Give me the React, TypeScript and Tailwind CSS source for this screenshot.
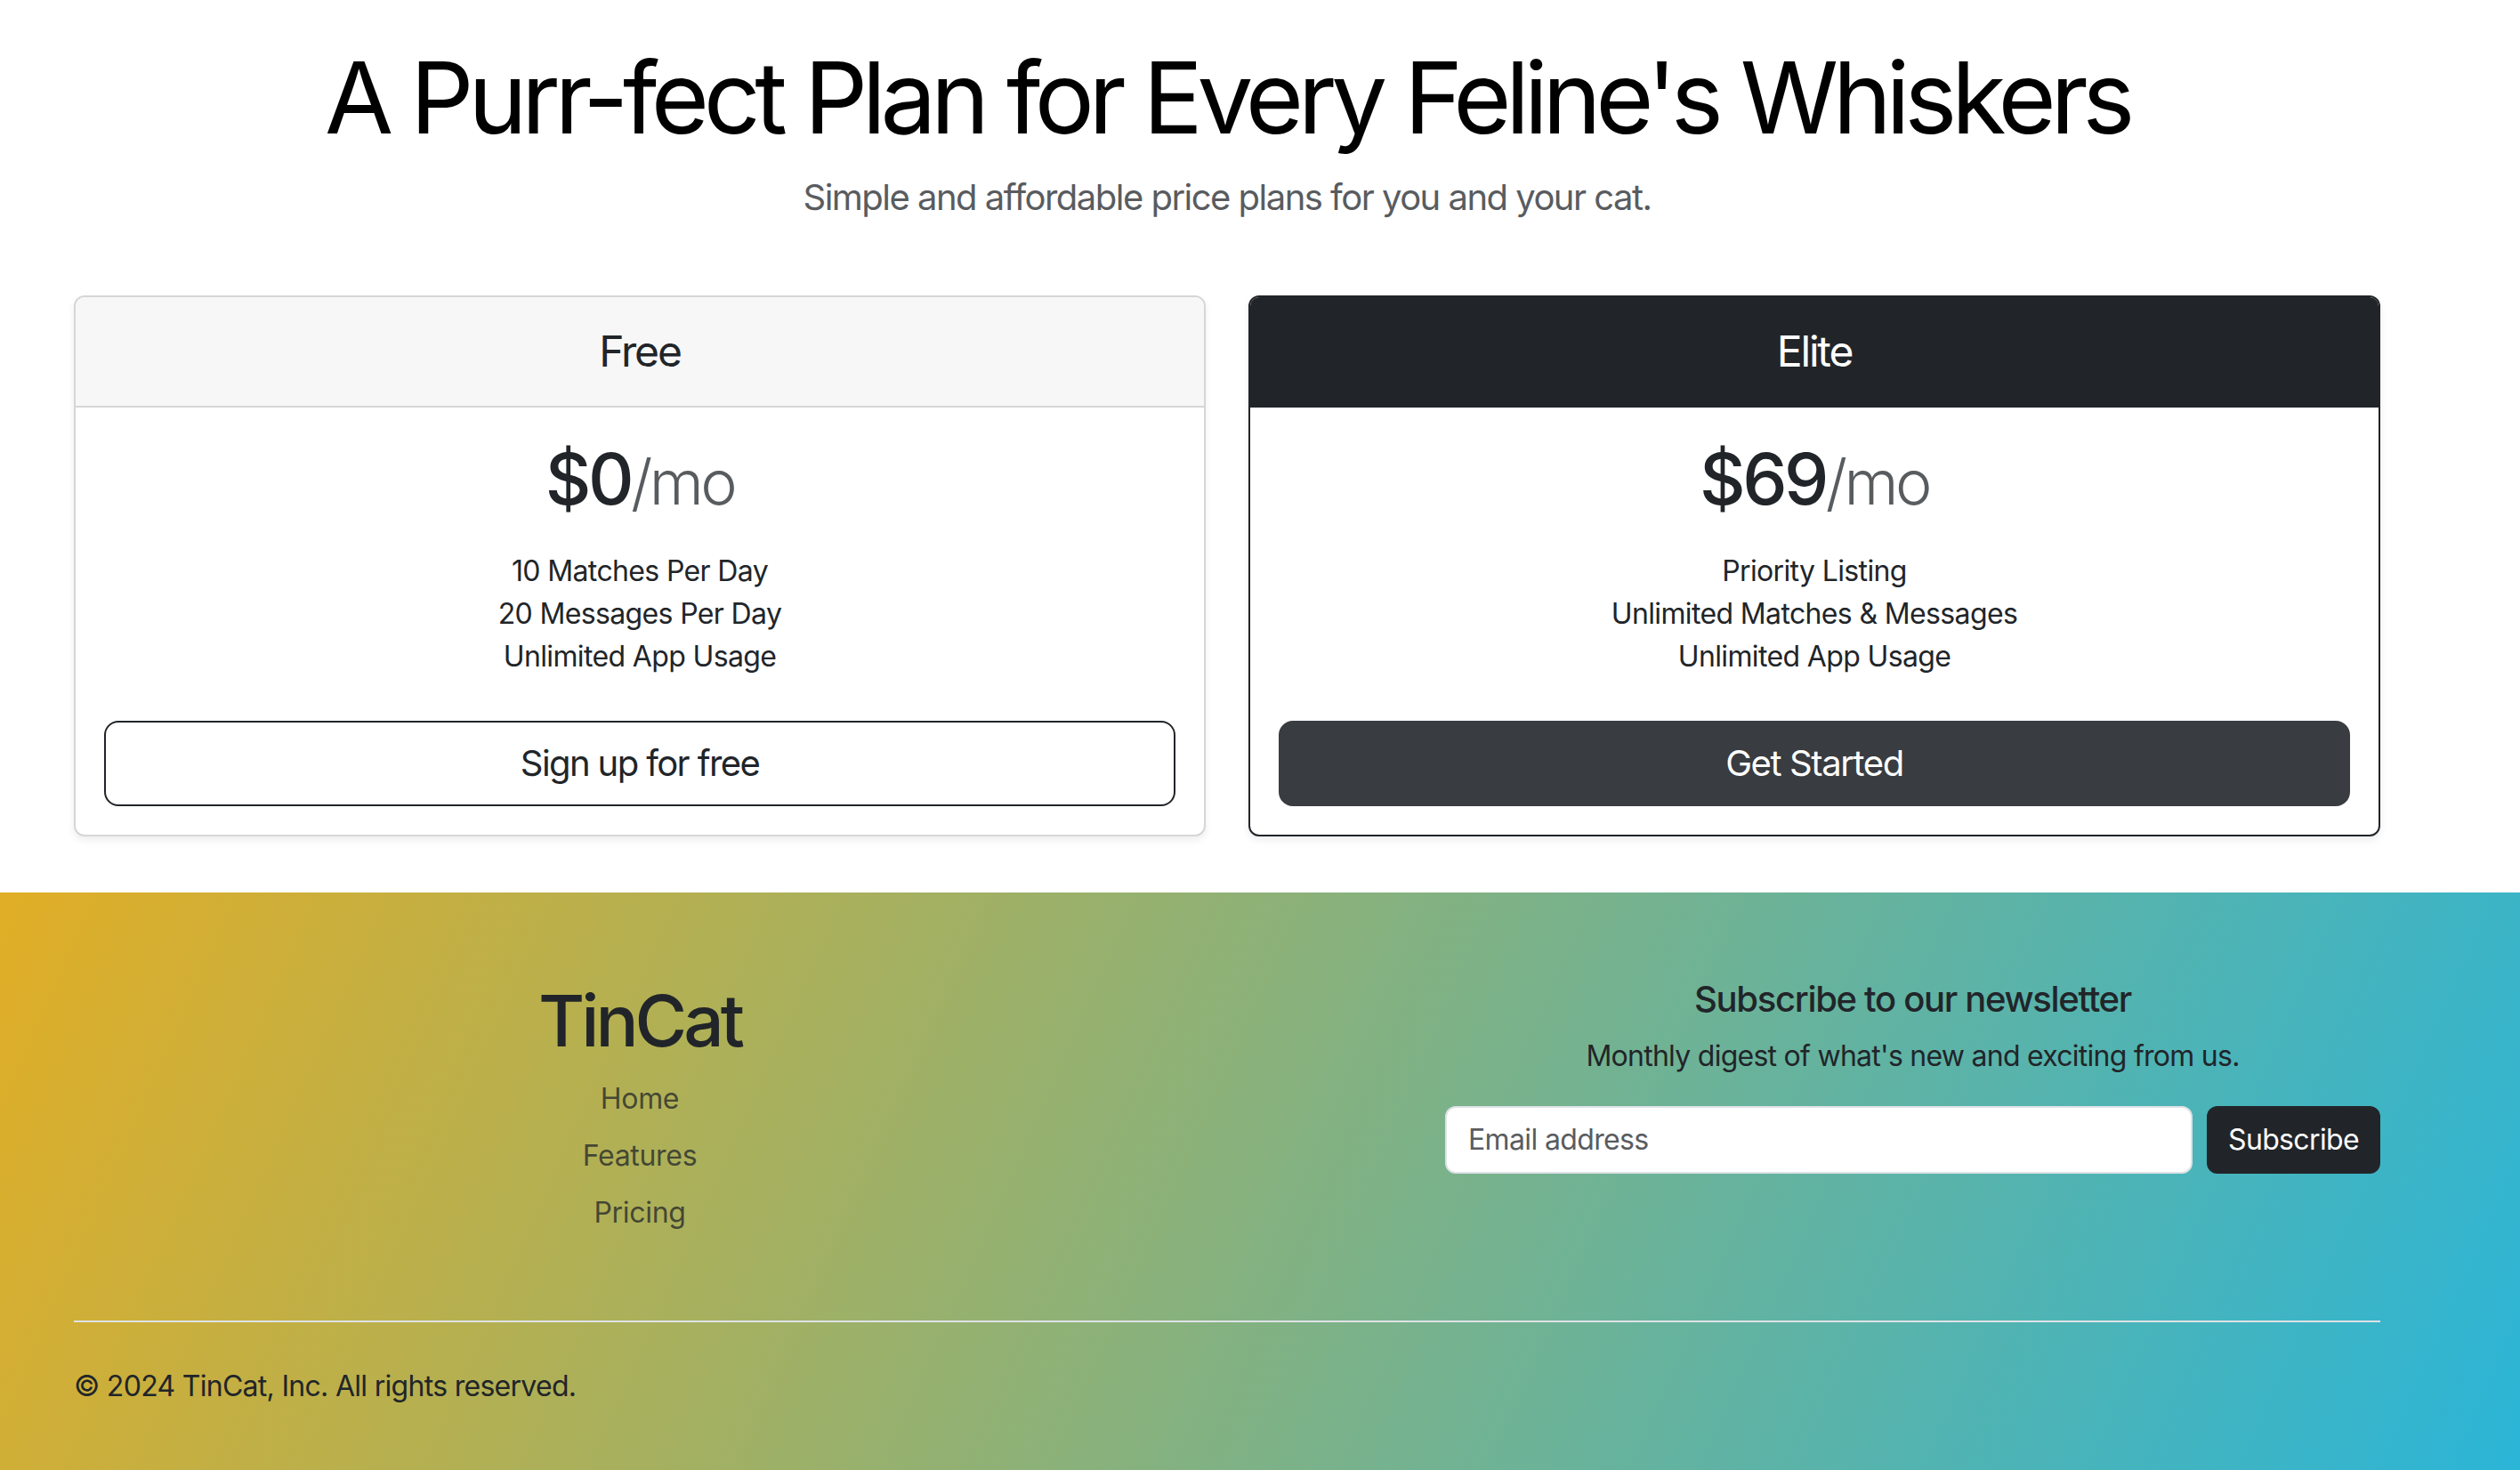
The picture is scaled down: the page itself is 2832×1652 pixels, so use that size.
import React from "react";

const FONT = "font-['Inter','Noto_Sans',sans-serif]";

function Card({
  title,
  price,
  features,
  cta,
  elite,
}: {
  title: string;
  price: string;
  features: string[];
  cta: string;
  elite?: boolean;
}) {
  return (
    <div
      className={
        "rounded-[12px] border-2 bg-white overflow-hidden shadow-[0_4px_8px_rgba(0,0,0,0.075)] " +
        (elite ? "border-[#212529]" : "border-[#d6d6d6]")
      }
    >
      <div
        className={
          "border-b-2 py-[32px] text-center text-[48px] leading-[1.2] font-normal tracking-[-0.045em] " +
          (elite
            ? "bg-[#212529] border-[#212529] text-white"
            : "bg-[#f7f7f7] border-[#d6d6d6] text-[#212529]")
        }
      >
        {title}
      </div>
      <div className="p-[32px] text-center">
        <div className="text-[80px] leading-[1.2] font-medium tracking-[-0.045em] text-[#212529]">
          {price}
          <small className="text-[70px] font-light text-[#595c5f]">/mo</small>
        </div>
        <ul className="mt-[32px] mb-[48px] text-[32px] leading-[48px] tracking-[-0.02em] text-[#212529]">
          {features.map((f) => (
            <li key={f}>{f}</li>
          ))}
        </ul>
        {elite ? (
          <button className="w-full rounded-[16px] border-2 border-[#393c40] bg-[#393c40] py-[16px] px-[32px] text-[40px] leading-[60px] tracking-[-0.035em] text-white">
            {cta}
          </button>
        ) : (
          <button className="w-full rounded-[16px] border-2 border-[#212529] bg-white py-[16px] px-[32px] text-[40px] leading-[60px] tracking-[-0.04em] text-[#212529]">
            {cta}
          </button>
        )}
      </div>
    </div>
  );
}

export default function App() {
  return (
    <div className={"bg-white text-[#212529] " + FONT}>
      <main className="ml-[83px] w-[2592px]">
        <header className="pt-[42px] text-center">
          <h1 className="mb-[16px] text-[112px] leading-[1.2] font-normal tracking-[-0.057em] text-black">
            A Purr-fect Plan for Every Feline's Whiskers
          </h1>
          <p className="text-[40px] leading-[60px] tracking-[-0.038em] text-[#595c5f]">
            Simple and affordable price plans for you and your cat.
          </p>
        </header>
        <div className="mt-[80px] grid grid-cols-2 gap-[48px]">
          <Card
            title="Free"
            price="$0"
            features={["10 Matches Per Day", "20 Messages Per Day", "Unlimited App Usage"]}
            cta="Sign up for free"
          />
          <Card
            title="Elite"
            price="$69"
            features={["Priority Listing", "Unlimited Matches & Messages", "Unlimited App Usage"]}
            cta="Get Started"
            elite
          />
        </div>
      </main>
      <footer className="mt-[63px] bg-[linear-gradient(114deg,#e1ae26,#29b5d9)] pt-[96px] pb-[96px]">
        <div className="ml-[83px] w-[2592px]">
          <div className="flex items-start">
            <div className="w-[1272px] text-center">
              <div className="mb-[16px] text-[80px] leading-[96px] font-medium tracking-[-0.05em] text-[#212529]">
                TinCat
              </div>
              <ul className="flex flex-col gap-[16px] text-[32px] leading-[48px] tracking-[-0.01em] text-[rgba(33,37,41,0.75)]">
                <li>Home</li>
                <li>Features</li>
                <li>Pricing</li>
              </ul>
            </div>
            <div className="ml-[269px] w-[1051px] text-center">
              <h5 className="mb-[16px] text-[40px] leading-[48px] font-medium tracking-[-0.033em] text-[#212529]">
                Subscribe to our newsletter
              </h5>
              <p className="mb-[32px] text-[32px] leading-[48px] tracking-[-0.023em] text-[#212529]">
                Monthly digest of what's new and exciting from us.
              </p>
              <div className="flex gap-[16px]">
                <input
                  className="h-[76px] flex-1 rounded-[12px] border-2 border-[#dee2e6] bg-white px-[24px] text-[32px] tracking-[-0.02em] text-[#212529] placeholder:text-[#595c5f] outline-none"
                  placeholder="Email address"
                />
                <button className="h-[76px] rounded-[12px] bg-[#212529] px-[24px] text-[32px] tracking-[-0.02em] text-white">
                  Subscribe
                </button>
              </div>
            </div>
          </div>
          <div className="mt-[97px] border-t-2 border-[#dee2e6] py-[48px] text-[32px] leading-[48px] tracking-[-0.022em] text-[#212529]">
            © 2024 TinCat, Inc. All rights reserved.
          </div>
        </div>
      </footer>
    </div>
  );
}
